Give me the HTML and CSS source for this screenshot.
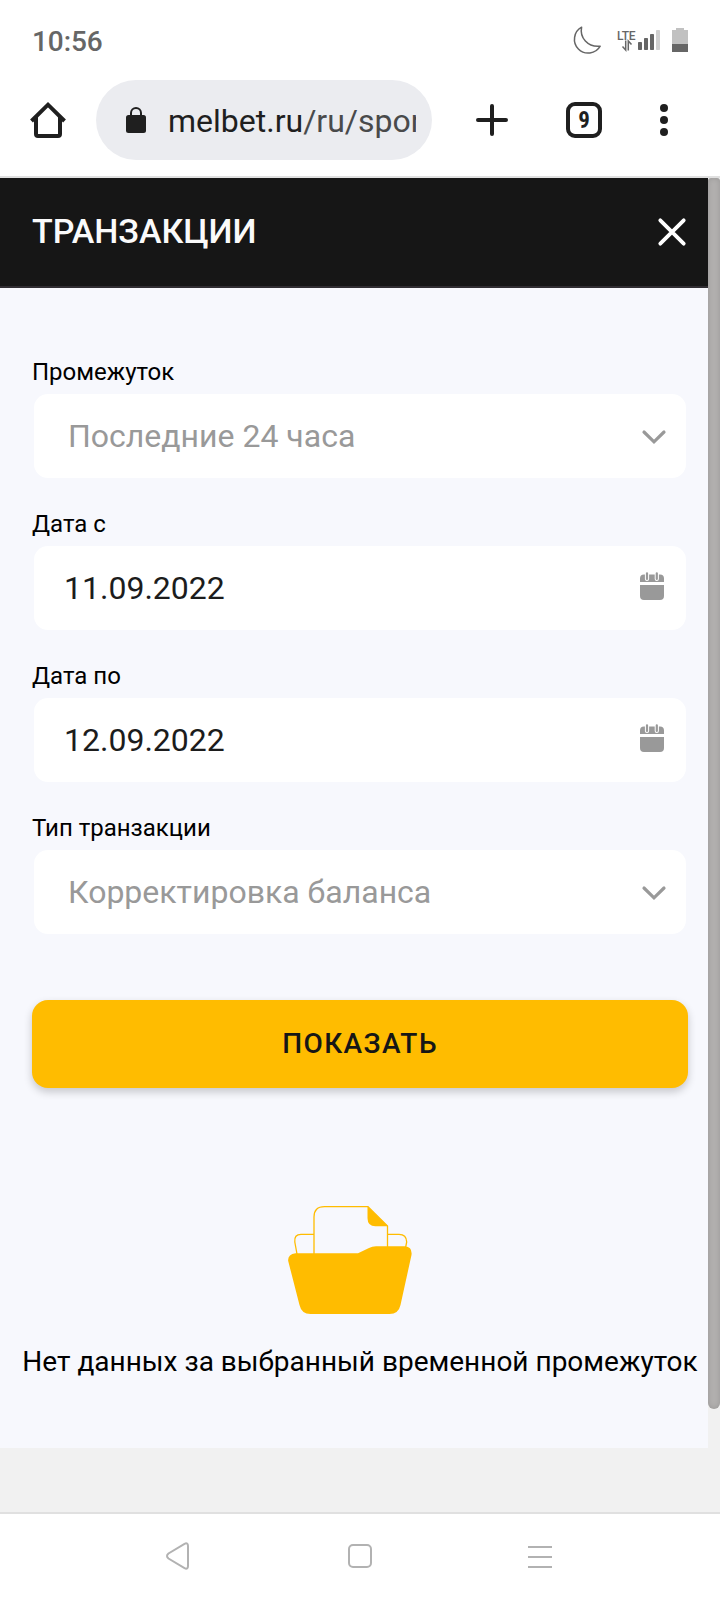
FILE: index.html
```
<!DOCTYPE html>
<html lang="ru">
	<head>
		<meta charset="utf-8">
		<title>Транзакции</title>
		<link rel="stylesheet" href="styles.css">
	</head>
	<body>
		<div class="status-bar">
			<span class="clock">10:56</span>
			<div class="status-icons">
				<svg class="moon" width="30" height="30" viewBox="0 0 30 30">
					<path d="M9.600 1.200C7.500 11.500 15.500 21.500 28.200 20.200A13.800 13.800 0 1 1 9.600 1.200Z" fill="none" stroke="#666" stroke-width="1.500" stroke-linejoin="round"/>
				</svg>
				<div class="lte">
					<span>LTE</span>
					<svg width="10" height="11" viewBox="0 0 10 11">
						<path d="M3.700 0.500V10L0.500 6.500M6.300 10.500V1L9.500 4.500" fill="none" stroke="#666" stroke-width="1.500"/>
					</svg>
				</div>
				<svg class="signal" width="22" height="20" viewBox="0 0 22 20">
					<g fill="#666">
						<rect x="0" y="12" width="4" height="8" rx="0.700"/>
						<rect x="6" y="8" width="4" height="12" rx="0.700"/>
						<rect x="12" y="4" width="4" height="16" rx="0.700"/>
					</g>
					<rect x="18" y="0" width="4" height="20" rx="0.700" fill="#d0d0d0"/>
				</svg>
				<svg class="battery" width="16" height="24" viewBox="0 0 16 24">
					<path d="M4 0H12V2H16V16H0V2H4Z" fill="#c1c1c1"/>
					<rect y="16" width="16" height="8" fill="#666"/>
				</svg>
			</div>
		</div>

		<div class="toolbar">
			<svg class="home" width="36" height="36" viewBox="0 0 36 36">
				<path d="M1.500 19L18 2.700L34.500 19M6 15V32Q6 34 8 34H28Q30 34 30 32V15" fill="none" stroke="#1f1f1f" stroke-width="4" stroke-linejoin="miter"/>
			</svg>
			<div class="address">
				<svg class="lock" width="20" height="27" viewBox="0 0 20 27">
					<rect x="0" y="8" width="20" height="18" rx="2.500" fill="#1f1f1f"/>
					<path d="M5 9V6A5 5 0 0 1 15 6V9" fill="none" stroke="#1f1f1f" stroke-width="2"/>
				</svg>
				<div class="url">melbet.ru<span>/ru/spor</span></div>
			</div>
			<svg class="plus" width="32" height="32" viewBox="0 0 32 32">
				<path d="M16 2V30M2 16H30" stroke="#1f1f1f" stroke-width="4" stroke-linecap="round"/>
			</svg>
			<div class="tabs">9</div>
			<svg class="dots" width="8" height="32" viewBox="0 0 8 32">
				<g fill="#1f1f1f">
					<circle cx="4" cy="4" r="4"/>
					<circle cx="4" cy="16" r="4"/>
					<circle cx="4" cy="28" r="4"/>
				</g>
			</svg>
		</div>

		<div class="viewport">
			<div class="page">
				<div class="page-header">
					<h1>ТРАНЗАКЦИИ</h1>
					<svg width="28" height="28" viewBox="0 0 28 28">
						<path d="M2.300 2.300L25.700 25.700M25.700 2.300L2.300 25.700" stroke="#fff" stroke-width="3.800" stroke-linecap="round"/>
					</svg>
				</div>

				<div class="filters">
					<div class="field">
						<label>Промежуток</label>
						<div class="control select">
							<span>Последние 24 часа</span>
							<svg width="24" height="14" viewBox="0 0 24 14">
								<path d="M2 2L12 11.800L22 2" fill="none" stroke="#999" stroke-width="3.200" stroke-linecap="round"/>
							</svg>
						</div>
					</div>
					<div class="field">
						<label>Дата с</label>
						<div class="control date">
							<span>11.09.2022</span>
							<svg width="24" height="28" viewBox="0 0 24 28">
								<path d="M0 10V6.500Q0 2.500 4 2.500H20Q24 2.500 24 6.500V10ZM0 13H24V24Q24 28 20 28H4Q0 28 0 24Z" fill="#999"/>
								<path d="M7 1.500V7M16.800 1.500V7" stroke="#fff" stroke-width="4.200" stroke-linecap="round"/>
								<path d="M7 1.300V7M16.800 1.300V7" stroke="#999" stroke-width="2.200" stroke-linecap="round"/>
							</svg>
						</div>
					</div>
					<div class="field">
						<label>Дата по</label>
						<div class="control date">
							<span>12.09.2022</span>
							<svg width="24" height="28" viewBox="0 0 24 28">
								<path d="M0 10V6.500Q0 2.500 4 2.500H20Q24 2.500 24 6.500V10ZM0 13H24V24Q24 28 20 28H4Q0 28 0 24Z" fill="#999"/>
								<path d="M7 1.500V7M16.800 1.500V7" stroke="#fff" stroke-width="4.200" stroke-linecap="round"/>
								<path d="M7 1.300V7M16.800 1.300V7" stroke="#999" stroke-width="2.200" stroke-linecap="round"/>
							</svg>
						</div>
					</div>
					<div class="field">
						<label>Тип транзакции</label>
						<div class="control select">
							<span>Корректировка баланса</span>
							<svg width="24" height="14" viewBox="0 0 24 14">
								<path d="M2 2L12 11.800L22 2" fill="none" stroke="#999" stroke-width="3.200" stroke-linecap="round"/>
							</svg>
						</div>
					</div>
					<button class="btn-show">ПОКАЗАТЬ</button>
				</div>

				<div class="empty">
					<svg width="124" height="109" viewBox="0 0 124 109">
						<g fill="none" stroke="#ffbc00" stroke-width="1.300">
							<path d="M26 48V11Q26 0.700 36.500 0.700H80L99.500 20V42"/>
							<path d="M9 48L6.800 36Q6 28.300 13 28.300H26M99.500 28.300H111Q118.500 28.300 118.700 36L117.500 42"/>
						</g>
						<path d="M79.500 0.700L100 20.300H87.500Q79.500 20.300 79.500 12Z" fill="#ffbc00"/>
						<path d="M7.500 47.200H70L81 42Q84 40.200 88 40.200H117Q124.500 41 123.500 49L112.500 99Q110.500 108 101.500 108H22.500Q13.500 108 11.500 99L0.200 55Q-0.500 48.500 7.500 47.200Z" fill="#ffbc00"/>
					</svg>
					<p>Нет данных за выбранный временной промежуток</p>
				</div>
			</div>
			<div class="scrollbar"></div>
		</div>

		<div class="nav-bar">
			<svg width="28" height="28" viewBox="0 0 28 28">
				<path d="M20.500 1.800Q24 0.300 24 4V24Q24 27.700 20.500 26.200L4.500 16.500Q1.500 14 4.500 11.500Z" fill="none" stroke="#b2b2b2" stroke-width="2"/>
			</svg>
			<svg width="24" height="24" viewBox="0 0 24 24">
				<rect x="1" y="1" width="22" height="22" rx="4" fill="none" stroke="#b2b2b2" stroke-width="2"/>
			</svg>
			<svg width="24" height="24" viewBox="0 0 24 24">
				<path d="M0 3H24M0 13H24M0 23H24" stroke="#b2b2b2" stroke-width="2"/>
			</svg>
		</div>
	</body>
</html>
```

FILE: styles.css
```
* {
	box-sizing: border-box;
}

body {
	margin: 0;
	width: 720px;
	height: 1600px;
	overflow: hidden;
	background-color: #fff;
	font-family: Roboto, "Liberation Sans", sans-serif;
	display: flex;
	flex-direction: column;
}

svg {
	display: block;
	flex: none;
	overflow: visible;
}

/* status bar */
.status-bar {
	height: 80px;
	padding: 0 32px;
	display: flex;
	justify-content: space-between;
}

.clock {
	font-size: 28px;
	line-height: 34px;
	padding-top: 25px;
	color: #666;
	font-weight: 500;
	letter-spacing: -0.1px;
}

.status-icons {
	display: flex;
	align-items: flex-start;
	color: #666;
}

.moon {
	margin: 26px 15px 0 0;
}

.lte {
	width: 21px;
	padding-top: 30px;
	font-size: 12px;
	line-height: 12px;
}

.lte span {
	display: block;
	font-weight: 500;
	letter-spacing: -0.3px;
}

.lte svg {
	margin: -2px 0 0 5px;
}

.signal {
	margin-top: 30px;
}

.battery {
	margin: 28px 0 0 12px;
}

/* browser toolbar */
.toolbar {
	height: 98px;
	padding: 0 52px 16px 30px;
	border-bottom: 2px solid #e0e0e0;
	display: flex;
	align-items: center;
}

.address {
	width: 336px;
	height: 80px;
	margin-left: 30px;
	padding-left: 30px;
	border-radius: 40px;
	background-color: #ebecf0;
	display: flex;
	align-items: center;
}

.url {
	width: 248px;
	margin-left: 22px;
	padding-top: 2px;
	overflow: hidden;
	white-space: nowrap;
	font-size: 32px;
	line-height: 44px;
	color: #1f1f1f;
}

.url span {
	color: #494a4b;
}

.plus {
	margin-left: 44px;
}

.tabs {
	width: 36px;
	height: 36px;
	margin-left: 58px;
	border: 4px solid #1f1f1f;
	border-radius: 9px;
	font-family: "Roboto Condensed", Roboto, sans-serif;
	font-size: 23px;
	font-weight: 700;
	line-height: 30px;
	text-align: center;
	color: #1f1f1f;
}

.dots {
	margin-left: auto;
}

/* page */
.viewport {
	height: 1334px;
	background-color: #f1f1f1;
	display: flex;
	align-items: flex-start;
}

.page {
	width: 708px;
	height: 1270px;
	background-color: #f7f8fd;
}

.scrollbar {
	width: 12px;
	height: 1231px;
	border-radius: 3px 3px 6px 6px;
	background-color: #b3b1b0;
	box-shadow: inset 0 0 6px rgba(0, 0, 0, 0.15);
}

.page-header {
	height: 110px;
	padding: 0 22px 0 32px;
	border-bottom: 2px solid #302d32;
	background-color: #161616;
	display: flex;
	align-items: center;
	justify-content: space-between;
}

.page-header h1 {
	margin: 0 0 2px;
	font-size: 34px;
	font-weight: 500;
	line-height: 40px;
	letter-spacing: -0.05px;
	color: #fafafa;
}

.filters {
	padding: 66px 20px 0 32px;
}

.field {
	height: 152px;
}

.field label {
	display: block;
	height: 40px;
	font-size: 24px;
	line-height: 37px;
	color: #000;
}

.control {
	height: 84px;
	margin: 0 2px;
	border-radius: 14px;
	background-color: #fff;
	font-size: 32px;
	display: flex;
	align-items: center;
	justify-content: space-between;
}

.select {
	padding: 0 20px 0 34px;
	color: #999;
}

.select svg {
	margin-top: 1px;
}

.date {
	padding: 0 22px 0 30px;
	color: #1c1c1c;
}

.date svg {
	margin-top: -4px;
}

.btn-show {
	display: block;
	width: 656px;
	height: 88px;
	margin-top: 38px;
	padding: 0 0 2px;
	border: 0;
	border-radius: 16px;
	background-color: #ffbc00;
	box-shadow: 0 4px 8px rgba(0, 0, 0, 0.2);
	font-family: inherit;
	font-size: 28px;
	font-weight: 500;
	letter-spacing: 1.4px;
	color: #161616;
}

.empty {
	width: 720px;
	padding-top: 118px;
}

.empty svg {
	margin-left: 288px;
}

.empty p {
	margin: 29px 0 0;
	text-align: center;
	font-size: 28px;
	line-height: 36px;
	white-space: nowrap;
	color: #000;
}

/* system navigation */
.nav-bar {
	height: 88px;
	padding: 0 168px 2px 164px;
	border-top: 2px solid #e0e0e0;
	display: flex;
	align-items: center;
	justify-content: space-between;
}
```
